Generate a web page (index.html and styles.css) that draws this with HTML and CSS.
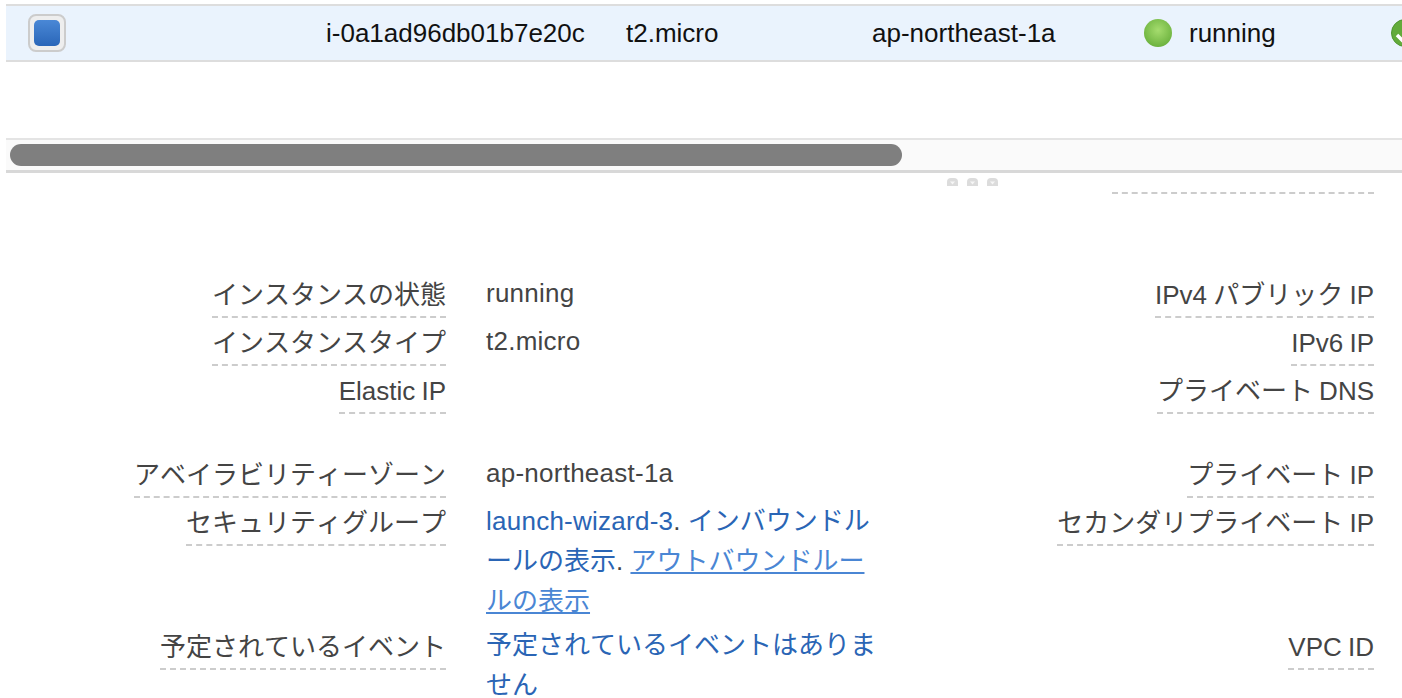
FILE: index.html
```html
<!DOCTYPE html>
<html lang="ja">
<head>
    <meta charset="UTF-8">
    <title>Instances</title>
    <link rel="stylesheet" href="styles.css">
</head>
<body>
    <!-- Instance table -->
    <div class="table-panel">
        <div class="instance-row">
            <div class="cell cell-check"><span class="checkbox"><span class="checkbox-fill"></span></span></div>
            <div class="cell cell-id">i-0a1ad96db01b7e20c</div>
            <div class="cell cell-type">t2.micro</div>
            <div class="cell cell-zone">ap-northeast-1a</div>
            <div class="cell cell-state"><span class="state-dot"></span>running</div>
            <div class="cell cell-status">
                <svg class="status-icon" width="28" height="28" viewBox="0 0 28 28">
                    <circle cx="14" cy="14" r="13.5" fill="#62ab3a" stroke="#4f9430"/>
                    <path d="M6 16l5 5 9-8" fill="none" stroke="#fff" stroke-width="3.5"/>
                </svg>
            </div>
        </div>
        <div class="table-spacer"></div>
        <div class="scroll-track"><div class="scroll-thumb"></div></div>
    </div>

    <!-- Details -->
    <div class="details">
        <div class="sash">
            <svg class="sash-dot" width="11" height="8" viewBox="0 0 11 8"><path d="M0 8V4a4 4 0 0 1 4-4h3a4 4 0 0 1 4 4v4z" fill="#dcdcdc"/><path d="M3 3.500h5L5.500 6.500z" fill="#f6f6f6"/></svg>
            <svg class="sash-dot" width="11" height="8" viewBox="0 0 11 8"><path d="M0 8V4a4 4 0 0 1 4-4h3a4 4 0 0 1 4 4v4z" fill="#dcdcdc"/><path d="M3 3.500h5L5.500 6.500z" fill="#f6f6f6"/></svg>
            <svg class="sash-dot" width="11" height="8" viewBox="0 0 11 8"><path d="M0 8V4a4 4 0 0 1 4-4h3a4 4 0 0 1 4 4v4z" fill="#dcdcdc"/><path d="M3 3.500h5L5.500 6.500z" fill="#f6f6f6"/></svg>
        </div>

        <div class="clipped-row"><span class="clipped-label"></span></div>

        <div class="detail-group">
            <div class="detail-row">
                <div class="label">インスタンスの状態</div>
                <div class="value"><span class="latin">running</span></div>
                <div class="label">IPv4 パブリック IP</div>
            </div>
            <div class="detail-row">
                <div class="label">インスタンスタイプ</div>
                <div class="value"><span class="latin">t2.micro</span></div>
                <div class="label">IPv6 IP</div>
            </div>
            <div class="detail-row">
                <div class="label">Elastic IP</div>
                <div class="value"></div>
                <div class="label">プライベート DNS</div>
            </div>
        </div>

        <div class="detail-group">
            <div class="detail-row">
                <div class="label">アベイラビリティーゾーン</div>
                <div class="value"><span class="latin">ap-northeast-1a</span></div>
                <div class="label">プライベート IP</div>
            </div>
            <div class="detail-row">
                <div class="label">セキュリティグループ</div>
                <div class="value"><a href="#" class="latin">launch-wizard-3</a>. <a href="#">インバウンドルールの表示</a>. <a href="#" class="link-hover">アウトバウンドルールの表示</a></div>
                <div class="label">セカンダリプライベート IP</div>
            </div>
            <div class="detail-row">
                <div class="label">予定されているイベント</div>
                <div class="value"><a href="#">予定されているイベントはありません</a></div>
                <div class="label">VPC ID</div>
            </div>
        </div>
    </div>
</body>
</html>
```

FILE: styles.css
```css
html, body {
    height: 100%;
    overflow: hidden;
}

body {
    margin: 0;
    background: #fff;
    font-family: "Liberation Sans", "Noto Sans CJK JP", sans-serif;
    font-size: 26px;
    font-kerning: none;
    color: #444;
}

/* Table */
.table-panel {
    margin: 4px 0 0 6px;
}

.instance-row {
    display: flex;
    align-items: center;
    height: 54px;
    background: #eaf3fd;
    border-top: 2px solid #ddd;
    border-bottom: 2px solid #ddd;
    color: #111;
    overflow: hidden;
}

.cell {
    flex: none;
    white-space: nowrap;
}

.cell-check { width: 320px; padding-left: 22px; box-sizing: border-box; }
.cell-id { width: 300px; }
.cell-type { width: 246px; }
.cell-zone { width: 272px; }
.cell-state { width: 247px; display: flex; align-items: center; }

.checkbox {
    display: flex;
    align-items: center;
    justify-content: center;
    width: 38px;
    height: 38px;
    box-sizing: border-box;
    background: #eee;
    border: 2px solid #ccc;
    border-radius: 8px;
}

.checkbox-fill {
    width: 26px;
    height: 26px;
    border-radius: 5px;
    background: linear-gradient(#4a88d6, #2a66b8);
}

.state-dot {
    width: 28px;
    height: 28px;
    margin-right: 17px;
    border-radius: 50%;
    background: radial-gradient(circle at 50% 40%, #a5dc6e, #6db33f 75%, #5c9c36);
}

.status-icon {
    display: block;
}

.table-spacer {
    height: 76px;
}

.scroll-track {
    height: 32px;
    padding: 4px 0 0 4px;
    box-sizing: border-box;
    background: #fafafa;
    border-top: 2px solid #e4e4e4;
}

.scroll-thumb {
    width: 892px;
    height: 22px;
    background: #7f7f7f;
    border-radius: 11px;
}

/* Details */
.details {
    position: relative;
    margin-left: 6px;
    border-top: 3px solid #d8d8d8;
    padding-right: 28px;
}

.sash {
    position: absolute;
    top: 5px;
    left: 941px;
    display: flex;
    gap: 9px;
}

.sash-dot {
    display: block;
}

.clipped-row {
    display: flex;
    justify-content: flex-end;
    margin-bottom: 76px;
}

.clipped-label {
    width: 262px;
    height: 19px;
    border-bottom: 2px dashed #ccc;
}

.detail-group {
    margin-bottom: 36px;
}

.detail-row {
    display: grid;
    grid-template-columns: 440px 395px 1fr;
    column-gap: 40px;
    align-items: start;
}

.label {
    justify-self: end;
    box-sizing: border-box;
    height: 48px;
    padding-top: 5px;
    line-height: 40px;
    border-bottom: 2px dashed #ccc;
    white-space: nowrap;
    word-spacing: -1px;
}

.value {
    padding: 3px 0 1px;
    line-height: 40px;
}

.latin {
    letter-spacing: 0.25px;
}

.value a {
    color: #2a65b5;
    text-decoration: none;
}

.value a.link-hover {
    color: #4a86d4;
    text-decoration: underline;
}
```
